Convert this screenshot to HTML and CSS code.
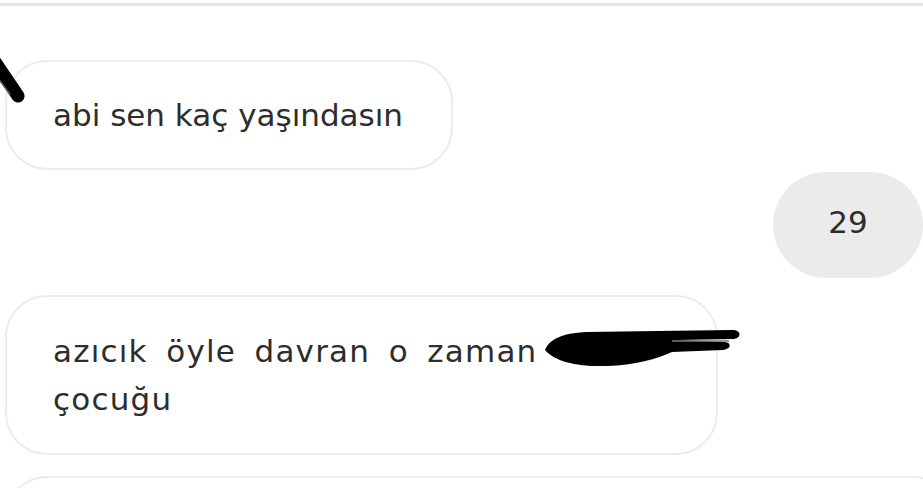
FILE: index.html
```html
<!DOCTYPE html>
<html lang="tr">
<head>
<meta charset="utf-8">
<title>Sohbet</title>
<link rel="stylesheet" href="styles.css">
</head>
<body>
<div class="topline"></div>
<main class="chat">
  <svg class="mark" width="30" height="60" viewBox="0 0 30 60" aria-hidden="true">
    <path d="M-5 12 L18 46" stroke="#000" stroke-width="13" stroke-linecap="round" fill="none"/>
    <path d="M-5 24 L10 44" stroke="#555" stroke-width="1.5" stroke-linecap="round" fill="none"/>
  </svg>
  <div class="bubble in b1">abi sen kaç yaşındasın</div>
  <div class="bubble out b2">29</div>
  <div class="bubble in b3">azıcık öyle davran o zaman <span class="redact"></span> çocuğu
    <svg class="scribble" width="210" height="42" viewBox="0 0 210 42" aria-hidden="true">
      <path d="M8 22 C12 12 24 5 50 4 L120 3 L196 2 C204 2 205 10 197 11 L140 12 L188 14 C195 15 194 21 186 22 L135 24 C120 31 98 37 70 38 C42 39 18 34 8 22 Z" fill="#000"/>
      <path d="M135 13 L192 13" stroke="#777" stroke-width="1.5" fill="none"/>
    </svg>
  </div>
  <div class="bubble in b4"></div>
</main>
</body>
</html>
```
FILE: styles.css
```css
html, body {
  margin: 0;
  background: #fff;
}
body {
  width: 923px;
  height: 488px;
  overflow: hidden;
  font-family: "DejaVu Sans", sans-serif;
  color: #2d2d2d;
}
.topline {
  height: 3px;
  margin-top: 3px;
  background: #e4e4e4;
}
.chat {
  position: relative;
  display: flex;
  flex-direction: column;
  padding-left: 5px;
}
.mark {
  position: absolute;
  left: 0;
  top: 44px;
  z-index: 2;
  filter: blur(0.6px);
}
.bubble {
  box-sizing: border-box;
  flex-shrink: 0;
  border-radius: 42px;
  font-size: 31px;
  line-height: 48px;
}
.in {
  border: 2px solid #ececec;
  background: #fff;
}
.out {
  background: #ebebeb;
}
.b1 {
  margin-top: 54px;
  width: 448px;
  height: 110px;
  padding: 29px 0 0 46px;
}
.b2 {
  align-self: flex-end;
  margin-top: 2px;
  width: 150px;
  height: 106px;
  border-radius: 53px;
  display: flex;
  align-items: center;
  justify-content: center;
  padding-bottom: 6px;
}
.b3 {
  position: relative;
  margin-top: 17px;
  width: 713px;
  height: 160px;
  padding: 30px 20px 0 46px;
  text-align: justify;
  letter-spacing: 1.2px;
}
.redact {
  display: inline-block;
  width: 140px;
  height: 1px;
}
.scribble {
  position: absolute;
  left: 530px;
  top: 31px;
  filter: blur(0.6px);
}
.b4 {
  margin-top: 21px;
  width: 950px;
  height: 100px;
}
```
